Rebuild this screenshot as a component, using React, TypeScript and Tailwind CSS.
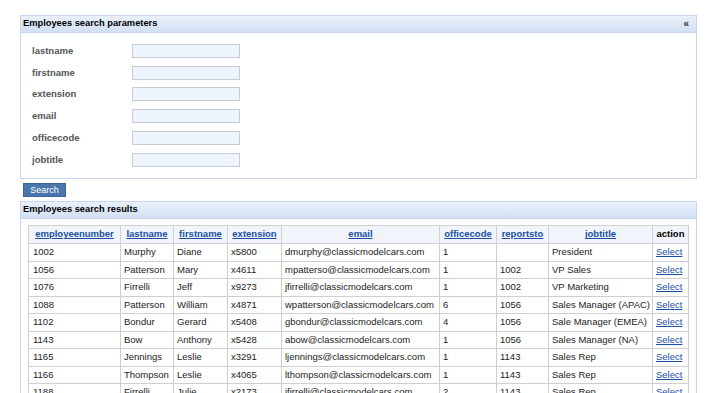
import React from "react";

type Employee = {
  num: string;
  last: string;
  first: string;
  ext: string;
  email: string;
  office: string;
  reports: string;
  title: string;
};

const employees: Employee[] = [
  { num: "1002", last: "Murphy", first: "Diane", ext: "x5800", email: "dmurphy@classicmodelcars.com", office: "1", reports: "", title: "President" },
  { num: "1056", last: "Patterson", first: "Mary", ext: "x4611", email: "mpatterso@classicmodelcars.com", office: "1", reports: "1002", title: "VP Sales" },
  { num: "1076", last: "Firrelli", first: "Jeff", ext: "x9273", email: "jfirrelli@classicmodelcars.com", office: "1", reports: "1002", title: "VP Marketing" },
  { num: "1088", last: "Patterson", first: "William", ext: "x4871", email: "wpatterson@classicmodelcars.com", office: "6", reports: "1056", title: "Sales Manager (APAC)" },
  { num: "1102", last: "Bondur", first: "Gerard", ext: "x5408", email: "gbondur@classicmodelcars.com", office: "4", reports: "1056", title: "Sale Manager (EMEA)" },
  { num: "1143", last: "Bow", first: "Anthony", ext: "x5428", email: "abow@classicmodelcars.com", office: "1", reports: "1056", title: "Sales Manager (NA)" },
  { num: "1165", last: "Jennings", first: "Leslie", ext: "x3291", email: "ljennings@classicmodelcars.com", office: "1", reports: "1143", title: "Sales Rep" },
  { num: "1166", last: "Thompson", first: "Leslie", ext: "x4065", email: "lthompson@classicmodelcars.com", office: "1", reports: "1143", title: "Sales Rep" },
  { num: "1188", last: "Firrelli", first: "Julie", ext: "x2173", email: "jfirrelli@classicmodelcars.com", office: "2", reports: "1143", title: "Sales Rep" },
];

const fields = ["lastname", "firstname", "extension", "email", "officecode", "jobtitle"];

const columns = [
  { key: "employeenumber", w: "w-[92px]" },
  { key: "lastname", w: "w-[53px]" },
  { key: "firstname", w: "w-[54px]" },
  { key: "extension", w: "w-[54px]" },
  { key: "email", w: "w-[158px]" },
  { key: "officecode", w: "w-[57px]" },
  { key: "reportsto", w: "w-[52px]" },
  { key: "jobtitle", w: "w-[104px]" },
];

function PanelHeader({ title, collapse }: { title: string; collapse?: boolean }) {
  return (
    <div className="h-[17px] flex items-center justify-between pl-[2px] pr-[7px] bg-gradient-to-b from-[#e9f0fa] to-[#d2e0f4] border-b border-[#c6d6ee]">
      <span className="text-[9.3px] font-bold text-black">{title}</span>
      {collapse && <span className="text-[10px] font-bold text-[#333] leading-none">«</span>}
    </div>
  );
}

export default function App() {
  return (
    <div className="h-[393px] w-[712px] overflow-hidden bg-white pt-[15px] pl-[20px] pr-[15px] font-['Liberation_Sans',Arial,sans-serif]">
      {/* Search parameters */}
      <div className="border border-[#c6d6ee]">
        <PanelHeader title="Employees search parameters" collapse />
        <div className="h-[145px] pt-[7px] pl-[11px]">
          {fields.map((f) => (
            <div key={f} className="h-[21.8px] flex items-center">
              <span className="w-[100px] text-[9.5px] font-bold text-[#555]">{f}</span>
              <div className="w-[108px] h-[14px] bg-[#eef4fb] border border-[#c8cdd4]"></div>
            </div>
          ))}
        </div>
      </div>

      <button className="mt-[4px] ml-[3px] w-[43px] h-[14px] bg-[#4a76ad] border border-[#3d6597] text-white text-[9px] leading-none flex items-center justify-center">
        Search
      </button>

      {/* Search results */}
      <div className="mt-[4px] border border-[#c6d6ee] border-b-0 h-[200px]">
        <PanelHeader title="Employees search results" />
        <div className="pt-[6px] pl-[7px]">
          <table className="table-fixed border-collapse w-[660px] text-[9.5px] text-[#222]">
            <thead>
              <tr className="h-[18px] bg-[#f1f5fb]">
                {columns.map((c) => (
                  <th key={c.key} className={`${c.w} border border-[#cfcfcf] text-center font-bold text-[#1a4fa3] underline`}>
                    {c.key}
                  </th>
                ))}
                <th className="w-[36px] border border-[#cfcfcf] text-center font-bold text-black">action</th>
              </tr>
            </thead>
            <tbody>
              {employees.map((e) => (
                <tr key={e.num} className="h-[17.5px] bg-white">
                  <td className="border border-[#cfcfcf] pl-[4px]">{e.num}</td>
                  <td className="border border-[#cfcfcf] pl-[3px]">{e.last}</td>
                  <td className="border border-[#cfcfcf] pl-[3px]">{e.first}</td>
                  <td className="border border-[#cfcfcf] pl-[3px]">{e.ext}</td>
                  <td className="border border-[#cfcfcf] pl-[3px] whitespace-nowrap overflow-hidden">{e.email}</td>
                  <td className="border border-[#cfcfcf] pl-[3px]">{e.office}</td>
                  <td className="border border-[#cfcfcf] pl-[3px]">{e.reports}</td>
                  <td className="border border-[#cfcfcf] pl-[3px] whitespace-nowrap">{e.title}</td>
                  <td className="border border-[#cfcfcf] pl-[3px] text-[#1a4fa3] underline">Select</td>
                </tr>
              ))}
            </tbody>
          </table>
        </div>
      </div>
    </div>
  );
}
